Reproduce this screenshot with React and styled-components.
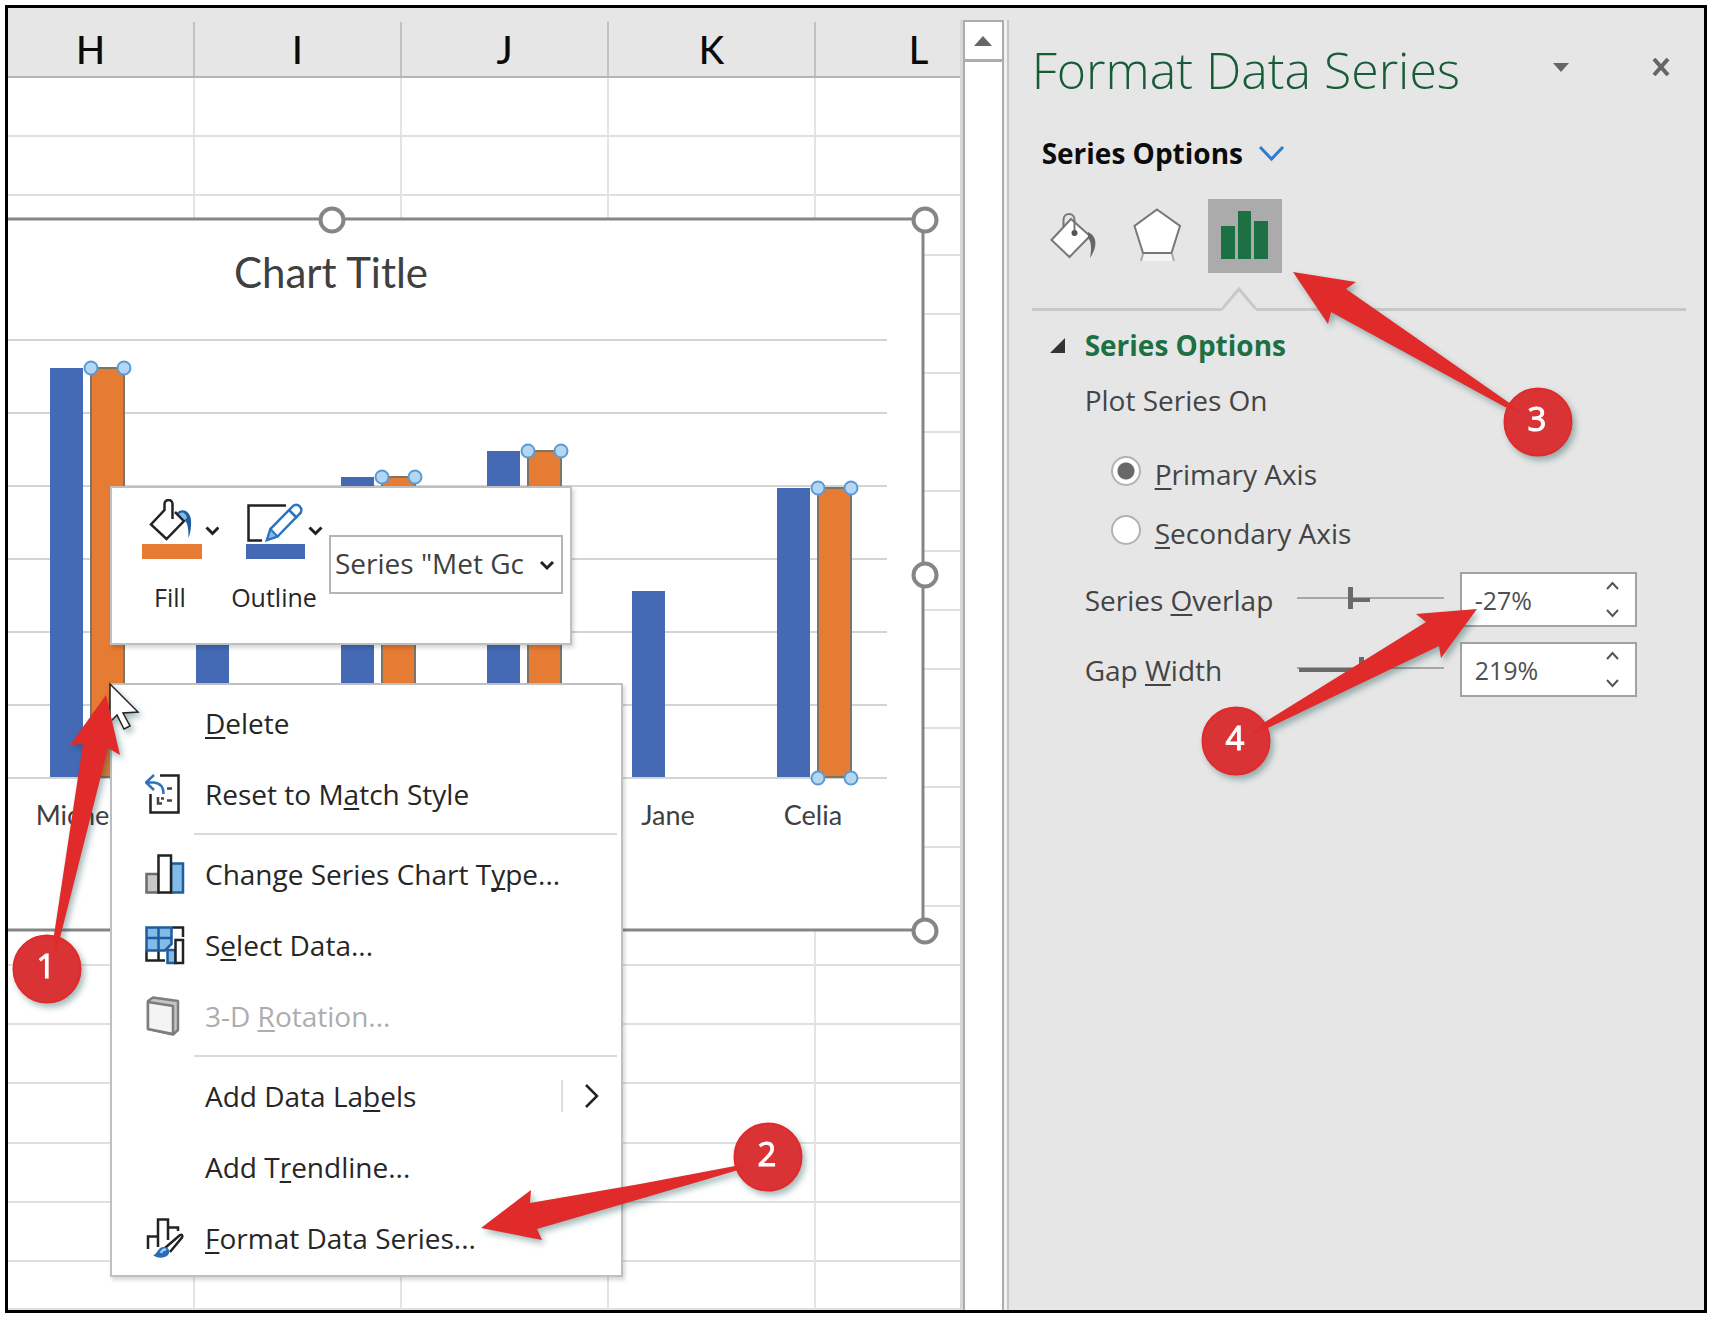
import React, { useState } from "react";
import styled, { createGlobalStyle, css } from "styled-components";

const ui = '"Open Sans", "Noto Sans", sans-serif';
const sheetFont = 'Lato, "Open Sans", sans-serif';
const blue = "#446ab5";
const orange = "#e67b33";
const green = "#1d7044";

const GlobalStyle = createGlobalStyle`
  *, *::before, *::after { box-sizing: border-box; }
  body { margin: 0; background: #fff; font-family: ${ui}; color: #262626; }
  button, input, select { font: inherit; color: inherit; }
  svg { display: block; }
`;

const Page = styled.main`
  height: 100vh;
  min-height: 1320px;
  padding: 5px 6px 7px 5px;
`;

const Frame = styled.div`
  display: flex;
  height: 100%;
  border: 3px solid #000;
  background: #e6e6e6;
  overflow: hidden;
`;

/* ---------- worksheet ---------- */

const Sheet = styled.section`
  position: relative;
  display: flex;
  flex-direction: column;
  flex: 1;
  min-width: 0;
  overflow: hidden;
`;

const HeaderRow = styled.div`
  display: grid;
  grid-template-columns: repeat(5, 207px);
  height: 70px;
  margin-left: -20px;
  padding-top: 14px;
  border-bottom: 2px solid #b4b4b4;
`;

const HeaderCell = styled.div`
  display: flex;
  align-items: center;
  justify-content: center;
  border-right: 2px solid #c2c2c2;
  font: 500 38px/1 ${sheetFont};
  color: #0a0a0a;
`;

const Cells = styled.div`
  display: grid;
  flex: 1;
  grid-template-columns: repeat(5, 207px);
  grid-template-rows: repeat(20, 1fr) 48px;
  margin-left: -20px;
  background: #fff;
`;

const Cell = styled.div`
  border-right: 2px solid #e4e4e6;
  border-bottom: 2px solid #e0e0e2;
`;

const ChartObject = styled.figure`
  position: absolute;
  top: 210px;
  left: 0;
  width: 918px;
  height: 713px;
  margin: 0;

  svg { overflow: visible; }
`;

const chartText = css`
  font-family: ${sheetFont};
  fill: #404040;
  text-anchor: middle;
`;
const ChartTitle = styled.text`
  ${chartText}
  font-size: 42px;
`;
const CategoryLabel = styled.text`
  ${chartText}
  font-size: 27px;
`;

/* ---------- floating tool bar and menu ---------- */

const floating = css`
  position: absolute;
  left: 102px;
  border: 2px solid #bfbfbf;
  background: #fff;
  box-shadow: 2px 3px 4px rgba(0, 0, 0, 0.16);
`;

const MiniToolbar = styled.div`
  ${floating}
  top: 478px;
  display: flex;
  gap: 6px;
  width: 462px;
  height: 159px;
  padding: 11px 7px 0 9px;
`;

const ToolButton = styled.button`
  display: flex;
  flex-direction: column;
  align-items: center;
  align-self: flex-start;
  width: 98px;
  padding: 0;
  border: 0;
  background: none;
  font-size: 25px;
  line-height: 32px;

  span { margin-top: 22px; }
`;

const SeriesPicker = styled.div`
  position: relative;
  flex: 1;
  height: 59px;
  margin-top: 36px;

  svg { position: absolute; right: 9px; top: 26px; pointer-events: none; }
`;

const PickerSelect = styled.select`
  width: 100%;
  height: 100%;
  padding: 0 28px 4px 4px;
  border: 2px solid #b5b5b5;
  border-radius: 0;
  background: #fff;
  appearance: none;
  font-size: 28px;
  color: #404040;
`;

const Menu = styled.div`
  ${floating}
  top: 675px;
  width: 513px;
  padding: 2px 0;
`;

const MenuItem = styled.button`
  display: grid;
  grid-template-columns: 40px 1fr auto;
  align-items: center;
  column-gap: 20px;
  width: 100%;
  height: 71px;
  padding: 0 22px 0 33px;
  border: 0;
  background: none;
  font-size: 28px;
  line-height: 36px;
  text-align: left;
  white-space: nowrap;
  color: #262626;

  &:disabled { color: #adadad; }
`;

const MenuRule = styled.hr`
  height: 2px;
  margin: 4px 4px 3px 82px;
  border: 0;
  background: #dadadd;
`;

const Key = styled.u`
  text-decoration-thickness: 2px;
  text-underline-offset: 3px;
  text-decoration-skip-ink: none;
`;

const Submenu = styled.span`
  display: flex;
  align-items: center;
  height: 32px;
  padding-left: 20px;
  border-left: 2px solid #dedede;
`;

/* ---------- scroll bar ---------- */

const ScrollColumn = styled.div`
  display: flex;
  flex: 0 0 49px;
  flex-direction: column;
  margin-top: 12px;
  padding-right: 3px;
  border-left: 3px solid #d6d8d8;
  border-right: 2px solid #c6c6c6;
  background: #f1f1f1;
`;

const ScrollUp = styled.button`
  display: flex;
  align-items: center;
  justify-content: center;
  height: 42px;
  padding: 0;
  border: 2px solid #acacac;
  border-bottom-width: 3px;
  background: #fff;
`;

const ScrollTrack = styled.div`
  flex: 1;
  border: solid #acacac;
  border-width: 0 2px;
  background: #fff;
`;

/* ---------- format pane ---------- */

const Pane = styled.aside`
  position: relative;
  flex: 0 0 41%;
  padding: 20px 18px 0 23px;
  color: #444;
`;

const PaneHeader = styled.header`
  display: flex;
  align-items: center;
  height: 84px;
`;

const PaneTitle = styled.h1`
  flex: 1;
  margin: 0;
  font-size: 50px;
  font-weight: 300;
  line-height: 64px;
  white-space: nowrap;
  color: #185c37;
`;

const IconButton = styled.button`
  display: flex;
  align-items: center;
  justify-content: center;
  width: 50px;
  height: 50px;
  padding: 0 0 6px;
  border: 0;
  background: none;

  & + & { margin-left: 50px; }
`;

const OptionsButton = styled.button`
  display: flex;
  align-items: center;
  gap: 16px;
  height: 40px;
  margin: 21px 0 0 10px;
  padding: 0;
  border: 0;
  background: none;
  font-size: 28px;
  font-weight: 700;
  color: #0c0c0c;
`;

const Tabs = styled.div`
  display: flex;
  gap: 14px;
  margin-top: 26px;
`;

const Tab = styled.button`
  width: 74px;
  height: 74px;
  padding: 0;
  border: 0;
  background: ${(p) => (p.$active ? "#ababab" : "none")};
`;

const TabRule = styled.div`
  display: flex;
  align-items: flex-end;
  height: 24px;
  margin-top: 14px;

  &::before, &::after { content: ""; height: 3px; background: #c8c8c8; }
  &::before { width: 190px; }
  &::after { flex: 1; }
`;

const SectionButton = styled.button`
  display: flex;
  align-items: center;
  gap: 20px;
  height: 40px;
  margin: 14px 0 0 18px;
  padding: 0;
  border: 0;
  background: none;
  font-size: 28px;
  font-weight: 700;
  color: ${green};
`;

const Group = styled.fieldset`
  display: flex;
  flex-direction: column;
  margin: 15px 0 0 53px;
  padding: 0;
  border: 0;
  font-size: 28px;
  line-height: 40px;

  legend { padding: 0; margin: 0 0 34px; }
`;

const RadioLabel = styled.label`
  display: flex;
  align-items: center;
  gap: 14px;
  height: 40px;
  margin: 0 0 19px 26px;
`;

const Radio = styled.input`
  width: 30px;
  height: 30px;
  margin: 0 0 6px;
  border: 2px solid #b2b2b2;
  border-radius: 50%;
  background: #fff;
  appearance: none;

  &:checked { background: radial-gradient(circle, #696969 8px, #fff 9px); }
`;

const Setting = styled.div`
  display: grid;
  grid-template-columns: 212px 147px auto;
  align-items: center;
  justify-content: start;
  height: 55px;
  margin: 0 0 15px 53px;
  font-size: 28px;
`;

const Slider = styled.input`
  width: 100%;
  height: 22px;
  margin: 0 0 4px;
  appearance: none;
  background:
    linear-gradient(#6a6a6a, #6a6a6a) ${(p) => p.$from}px 11px / ${(p) => p.$length}px 4px no-repeat,
    linear-gradient(#a6a6a6, #a6a6a6) 0 10px / 100% 2px no-repeat;

  &::-webkit-slider-thumb {
    width: 5px;
    height: 22px;
    appearance: none;
    background: #6a6a6a;
  }
`;

const SpinBox = styled.div`
  display: flex;
  width: 177px;
  height: 55px;
  margin-left: 16px;
  border: 2px solid #a2a2a2;
  background: #fff;

  input {
    flex: 1;
    min-width: 0;
    padding: 0 0 0 13px;
    border: 0;
    background: none;
    font-size: 25px;
    color: #505050;
  }
`;

const SpinButtons = styled.div`
  display: flex;
  flex-direction: column;
  justify-content: center;
  width: 44px;

  button {
    display: flex;
    flex: 0 0 27px;
    align-items: center;
    justify-content: center;
    padding: 0;
    border: 0;
    background: none;
  }
`;

/* ---------- callouts drawn over the window ---------- */

const Callouts = styled.svg`
  position: absolute;
  top: 0;
  left: 0;
  overflow: visible;
  pointer-events: none;
  filter: drop-shadow(3px 4px 3px rgba(0, 60, 60, 0.35));
`;

const CalloutNumber = styled.text`
  font: 400 33px ${ui};
  fill: #fff;
  stroke: #fff;
  text-anchor: middle;
`;

function Callout({ n, x, y, arrow }) {
  return (
    <g>
      <circle cx={x} cy={y} r="33.500" fill="#d93336" stroke="#e12a2c" strokeWidth="2" />
      <path d={arrow} fill="#e12a2a" />
      <CalloutNumber x={x - 1} y={y + 9}>{n}</CalloutNumber>
    </g>
  );
}

/* ---------- icons ---------- */

function Chevron({ w = 13, h = 7, stroke = "#222", sw = 3, up }) {
  const d = up ? `M1 ${h}L${w / 2} 1L${w - 1} ${h}` : `M1 1L${w / 2} ${h}L${w - 1} 1`;
  return (
    <svg width={w} height={h + 1} fill="none" stroke={stroke} strokeWidth={sw} overflow="visible" aria-hidden="true">
      <path d={d} />
    </svg>
  );
}

const FillIcon = () => (
  <svg width="98" height="60" viewBox="121 499 98 60" fill="none" aria-hidden="true">
    <path d="M172.500 519V504a4 4 0 0 0-8 0V510L151 524.500L166.500 539L184 521L175 512" stroke="#222" strokeWidth="2.500" />
    <path d="M177 513C181 508 190 510 191 520C191.500 528 190 534 188.500 538C188.500 530 188 523 184.500 520Z" fill="#1e5c9e" />
    <path d="M179 514C182 511 186 513 187 518L184.500 520Z" fill="#83bbe8" />
    <rect x="142" y="544" width="60" height="15" fill={orange} />
    <path d="M206.500 527.500L212.500 533.500L218.500 527.500" stroke="#222" strokeWidth="3" />
  </svg>
);

const OutlineIcon = () => (
  <svg width="98" height="60" viewBox="225 499 98 60" fill="none" aria-hidden="true">
    <path d="M286 505.500H248.500V540.500H262" stroke="#222" strokeWidth="2.500" />
    <path d="M267 540L270.500 529L292 507C297 501 305 509 299.500 514L277.500 536.500Z" fill="#fff" stroke="#2a74bf" strokeWidth="2.500" />
    <path d="M267 540L270.500 529L277.500 536.500Z" fill="#83bbe8" stroke="#2a74bf" strokeWidth="2" />
    <path d="M289 510L297 518" stroke="#2a74bf" strokeWidth="2.500" />
    <rect x="246" y="544" width="59" height="15" fill={blue} />
    <path d="M309.500 527.500L315.500 533.500L321.500 527.500" stroke="#222" strokeWidth="3" />
  </svg>
);

const ResetIcon = () => (
  <svg width="40" height="40" fill="none" strokeWidth="2.500" aria-hidden="true">
    <path d="M15 1.500H33.500V38.500H5.500V20" stroke="#222" />
    <path d="M9 1L1 8.500L9 16M1 8.500H9C15 9 18.500 13 18.500 20" stroke="#2a74bf" />
    <path d="M22 14.500H27M13 23V29.500H17M16 24.500H19M22 26.500H27" stroke="#444" />
  </svg>
);

const ChartTypeIcon = () => (
  <svg width="40" height="40" strokeWidth="2.500" aria-hidden="true">
    <rect x="1.500" y="20" width="12" height="18.500" fill="#c8c8c8" stroke="#6b6b6b" />
    <rect x="26" y="9.500" width="12" height="29" fill="#83bbe8" stroke="#1e5c9e" />
    <rect x="13.500" y="1.500" width="12.500" height="37" fill="#fff" stroke="#222" />
  </svg>
);

const SelectDataIcon = () => (
  <svg width="40" height="40" fill="none" strokeWidth="2.500" aria-hidden="true">
    <path d="M27 2.500H38V12M1.500 25V35.500H20M13.500 26V35.500" stroke="#222" />
    <path d="M1.500 2.500H26.500V19L20 25.500H1.500Z" fill="#83bbe8" stroke="#1e5c9e" />
    <path d="M1.500 13H26.500M13.500 2.500V25.500" stroke="#1e5c9e" />
    <rect x="22.500" y="25" width="8" height="13" fill="#83bbe8" stroke="#1e5c9e" />
    <rect x="30.500" y="15" width="7.500" height="23" fill="#fff" stroke="#222" />
  </svg>
);

const RotationIcon = () => (
  <svg width="40" height="40" strokeWidth="2.500" strokeLinejoin="round" aria-hidden="true">
    <path d="M3 5L8 1.500L33 5V34L28 38.500L3 33Z" fill="#c4c4c4" stroke="#7d7d7d" />
    <path d="M3 6L28 10V38L3 33Z" fill="#f4f4f4" stroke="#7d7d7d" />
  </svg>
);

const FormatIcon = () => (
  <svg width="40" height="40" fill="none" strokeWidth="2.500" aria-hidden="true">
    <path d="M3 31V18.500H13M13 29V1.500H23V22M23 9.500H33V13" stroke="#222" />
    <path d="M20 30L35 17C37 16 38 17.500 37 19.500L25 34" fill="#fff" stroke="#222" />
    <path d="M8 37C13 36 12 30 18 29C24 29 26 33 23 37C19 41 11 40 8 37Z" fill="#2a6db5" />
    <path d="M16 35C17 32 19 31 21 32" stroke="#a8d2f3" />
  </svg>
);

const PaneFillIcon = () => (
  <svg width="74" height="74" viewBox="1032 199 74 74" fill="none" aria-hidden="true">
    <path d="M1051.500 240L1071 219L1090 236L1069.500 257Z" fill="#fff" stroke="#777" strokeWidth="2" />
    <path d="M1063.500 227V220C1063.500 212 1074.500 212 1074.500 220V232" stroke="#777" strokeWidth="2" />
    <circle cx="1074.500" cy="233" r="3" fill="#555" />
    <path d="M1088 232C1097 236 1098 246 1090 258C1092 248 1091 241 1088 238Z" fill="#666" />
  </svg>
);

const EffectsIcon = () => (
  <svg width="74" height="74" viewBox="1121 199 74 74" fill="none" aria-hidden="true">
    <path d="M1142 261L1144 253H1173L1175 261Z" fill="#f4f4f4" />
    <path d="M1142 261L1144 254M1175 261L1173 254" stroke="#aaa" strokeWidth="2" />
    <path d="M1158 209.500L1181 226L1172.500 253H1144L1135.500 226Z" fill="#fff" stroke="#777" strokeWidth="2" />
  </svg>
);

const SeriesIcon = () => (
  <svg width="74" height="74" fill={green} aria-hidden="true">
    <path d="M13 27h14v33h-14zM30 12h13v48h-13zM46 22h14v38h-14z" />
  </svg>
);

/* ---------- chart ---------- */

const baseline = 777;
const series = [
  { x: 50, top: 368, goal: true, label: "Michelle" },
  { x: 196, top: 600 },
  { x: 341, top: 477, goal: true },
  { x: 487, top: 451, goal: true },
  { x: 632, top: 591, label: "Jane" },
  { x: 777, top: 488, goal: true, label: "Celia", foot: true },
];

function Chart() {
  return (
    <ChartObject>
      <svg width="918" height="713" viewBox="8 218 918 713">
        <path d="M0 219H923V930H0" fill="#fff" stroke="#868686" strokeWidth="3" />
        <ChartTitle x="331" y="288">Chart Title</ChartTitle>
        {[340, 413, 486, 559, 632, 705, 778].map((y) => (
          <path key={y} d={`M8 ${y}H887`} stroke="#d4d4d4" strokeWidth="2" />
        ))}
        {series.map((s) => (
          <g key={s.x}>
            <rect x={s.x} y={s.top} width="33" height={baseline - s.top} fill={blue} />
            {s.goal && (
              <>
                <rect x={s.x + 41} y={s.top} width="33" height={baseline - s.top} fill={orange} stroke="#7b7468" strokeWidth="2" />
                {[s.x + 41, s.x + 74].map((hx) => (
                  <g key={hx} fill="#b5d6f0" stroke="#5b9bd5" strokeWidth="2">
                    <circle cx={hx} cy={s.top} r="6.500" />
                    {s.foot && <circle cx={hx} cy="778" r="6.500" />}
                  </g>
                ))}
              </>
            )}
            {s.label && <CategoryLabel x={s.x + 36} y="825">{s.label}</CategoryLabel>}
          </g>
        ))}
        {[[332, 220], [925, 220], [925, 575], [925, 931]].map(([x, y]) => (
          <circle key={`${x}-${y}`} cx={x} cy={y} r="11.500" fill="#fff" stroke="#868686" strokeWidth="4" />
        ))}
      </svg>
    </ChartObject>
  );
}

function ContextMenu() {
  return (
    <Menu role="menu">
      <MenuItem role="menuitem"><span /><span><Key>D</Key>elete</span></MenuItem>
      <MenuItem role="menuitem"><ResetIcon /><span>Reset to M<Key>a</Key>tch Style</span></MenuItem>
      <MenuRule />
      <MenuItem role="menuitem"><ChartTypeIcon /><span>Change Series Chart T<Key>y</Key>pe...</span></MenuItem>
      <MenuItem role="menuitem"><SelectDataIcon /><span>S<Key>e</Key>lect Data...</span></MenuItem>
      <MenuItem role="menuitem" disabled><RotationIcon /><span>3-D <Key>R</Key>otation...</span></MenuItem>
      <MenuRule />
      <MenuItem role="menuitem">
        <span />
        <span>Add Data La<Key>b</Key>els</span>
        <Submenu>
          <svg width="16" height="26" fill="none" stroke="#222" strokeWidth="2.500" aria-hidden="true">
            <path d="M3 2L14 13L3 24" />
          </svg>
        </Submenu>
      </MenuItem>
      <MenuItem role="menuitem"><span /><span>Add T<Key>r</Key>endline...</span></MenuItem>
      <MenuItem role="menuitem"><FormatIcon /><span><Key>F</Key>ormat Data Series...</span></MenuItem>
    </Menu>
  );
}

function SettingRow({ id, label, name, value, min, max, origin, onChange }) {
  const at = (v) => Math.round(2 + (142 * (v - min)) / (max - min));
  const from = Math.min(at(value), at(origin));
  const length = Math.abs(at(value) - at(origin));
  return (
    <Setting>
      <label htmlFor={id}>{label}</label>
      <Slider
        type="range"
        aria-label={name}
        min={min}
        max={max}
        value={value}
        $from={from}
        $length={length}
        onChange={(e) => onChange(Number(e.target.value))}
      />
      <SpinBox>
        <input id={id} type="text" value={`${value}%`} onChange={(e) => onChange(parseInt(e.target.value, 10) || 0)} />
        <SpinButtons>
          <button aria-label="Increase" onClick={() => onChange(Math.min(max, value + 1))}><Chevron up stroke="#555" sw={2} /></button>
          <button aria-label="Decrease" onClick={() => onChange(Math.max(min, value - 1))}><Chevron stroke="#555" sw={2} /></button>
        </SpinButtons>
      </SpinBox>
    </Setting>
  );
}

export default function App() {
  const [axis, setAxis] = useState("primary");
  const [overlap, setOverlap] = useState(-27);
  const [gap, setGap] = useState(219);

  return (
    <Page>
      <GlobalStyle />
      <Frame>
        <Sheet>
          <HeaderRow>
            {["H", "I", "J", "K", "L"].map((c) => <HeaderCell key={c}>{c}</HeaderCell>)}
          </HeaderRow>
          <Cells>
            {Array.from({ length: 105 }, (_, i) => <Cell key={i} />)}
          </Cells>
          <Chart />
          <MiniToolbar role="toolbar">
            <ToolButton><FillIcon /><span>Fill</span></ToolButton>
            <ToolButton><OutlineIcon /><span>Outline</span></ToolButton>
            <SeriesPicker>
              <PickerSelect aria-label="Chart element">
                <option>Series "Met Gc</option>
              </PickerSelect>
              <Chevron w={14} h={7} />
            </SeriesPicker>
          </MiniToolbar>
          <ContextMenu />
          <Callouts width="100" height="100" viewBox="8 8 100 100" aria-label="Steps 1 and 2">
            <path d="M110 684L138 712L123 713L130 726L124 729L117 715L110 722Z" fill="#fff" stroke="#222" strokeWidth="1.500" />
            <Callout n="1" x={47} y={969} arrow="M106 695L120 755L108 748L60 938L55 952L54 935L83 744L70 745Z" />
            <Callout n="2" x={768} y={1157} arrow="M481 1228L531 1190L530 1203L640 1184L735 1166L750 1164L735 1171L640 1199L537 1229L542 1240Z" />
          </Callouts>
        </Sheet>

        <ScrollColumn>
          <ScrollUp aria-label="Scroll up">
            <svg width="18" height="10" fill="#666" aria-hidden="true"><path d="M0 10L9 0L18 10Z" /></svg>
          </ScrollUp>
          <ScrollTrack />
        </ScrollColumn>

        <Pane>
          <PaneHeader>
            <PaneTitle>Format Data Series</PaneTitle>
            <IconButton aria-label="Task pane options">
              <svg width="16" height="9" fill="#666" aria-hidden="true"><path d="M0 0H16L8 9Z" /></svg>
            </IconButton>
            <IconButton aria-label="Close">
              <svg width="18" height="18" stroke="#666" strokeWidth="4" aria-hidden="true"><path d="M2 1L16 17M16 1L2 17" /></svg>
            </IconButton>
          </PaneHeader>
          <OptionsButton>Series Options<Chevron w={25} h={13} stroke="#2b7cd3" /></OptionsButton>
          <Tabs role="tablist">
            <Tab role="tab" aria-label="Fill and line"><PaneFillIcon /></Tab>
            <Tab role="tab" aria-label="Effects"><EffectsIcon /></Tab>
            <Tab role="tab" aria-label="Series options" aria-selected="true" $active><SeriesIcon /></Tab>
          </Tabs>
          <TabRule>
            <svg width="34" height="24" fill="none" stroke="#c8c8c8" strokeWidth="3" aria-hidden="true">
              <path d="M0 22L17 2L34 22" />
            </svg>
          </TabRule>
          <SectionButton aria-expanded="true">
            <svg width="15" height="15" fill="#333" aria-hidden="true"><path d="M0 15H15V0Z" /></svg>
            Series Options
          </SectionButton>
          <Group>
            <legend>Plot Series On</legend>
            <RadioLabel>
              <Radio type="radio" name="axis" checked={axis === "primary"} onChange={() => setAxis("primary")} />
              <span><Key>P</Key>rimary Axis</span>
            </RadioLabel>
            <RadioLabel>
              <Radio type="radio" name="axis" checked={axis === "secondary"} onChange={() => setAxis("secondary")} />
              <span><Key>S</Key>econdary Axis</span>
            </RadioLabel>
          </Group>
          <SettingRow id="overlap" name="Series Overlap" label={<>Series <Key>O</Key>verlap</>} value={overlap} min={-100} max={100} origin={0} onChange={setOverlap} />
          <SettingRow id="gap" name="Gap Width" label={<>Gap <Key>W</Key>idth</>} value={gap} min={0} max={500} origin={0} onChange={setGap} />
          <Callouts width="100" height="100" viewBox="1009 8 100 100" aria-label="Steps 3 and 4">
            <Callout n="3" x={1538} y={422} arrow="M1293 272L1356 282L1346 289L1508 402L1520 412L1505 407L1331 312L1328 324Z" />
            <Callout n="4" x={1236} y={741} arrow="M1477 609L1441 658L1439 646L1268 728L1250 735L1265 722L1426 622L1416 614Z" />
          </Callouts>
        </Pane>
      </Frame>
    </Page>
  );
}
